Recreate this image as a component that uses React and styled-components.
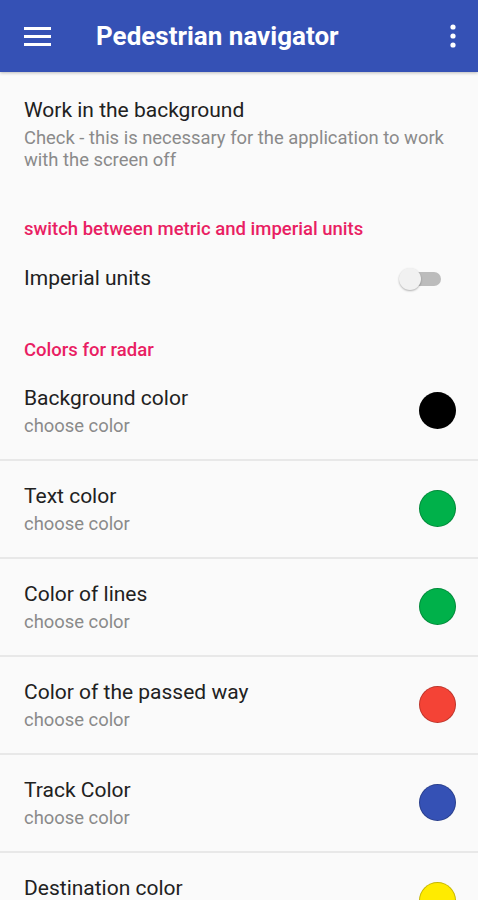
import React from 'react'
import styled, { createGlobalStyle } from 'styled-components'

const Global = createGlobalStyle`
    body {
        margin: 0;
        background: #fafafa;
        font-family: Roboto, "Noto Sans", sans-serif;
    }
`

const Screen = styled.div`
    width: 478px;
    height: 900px;
    background: #fafafa;
    overflow: hidden;
`

const AppBar = styled.header`
    height: 72px;
    background: #3551b5;
    display: flex;
    align-items: center;
    padding: 0 20px 0 24px;
    box-shadow: 0 1px 3px rgba(0, 0, 0, 0.25);
    color: #fff;
`

const Title = styled.h1`
    flex: 1;
    margin: 0 0 0 44px;
    font-size: 26px;
    font-weight: 700;
`

const Item = styled.div`
    display: flex;
    align-items: center;
    padding: ${(p) => p.pad || '22px 22px 22.5px 24px'};
    border-bottom: ${(p) => (p.divider ? '2px solid #e8e8e8' : 'none')};
`

const Texts = styled.div`
    flex: 1;
`

const ItemTitle = styled.div`
    font-size: 21px;
    line-height: 27px;
    color: #212121;
`

const ItemSub = styled.div`
    font-size: 18.4px;
    line-height: 22px;
    color: #8a8a8a;
    margin-top: 2.5px;
`

const Category = styled.div`
    font-size: 18.5px;
    line-height: 22px;
    font-weight: 500;
    color: #e91e63;
    padding: ${(p) => p.pad};
`

const Swatch = styled.div`
    width: 37px;
    height: 37px;
    border-radius: 50%;
    background: ${(p) => p.color};
    border: 1px solid rgba(0, 0, 0, 0.22);
    box-sizing: border-box;
`

const Switch = styled.div`
    position: relative;
    width: 42px;
    height: 22px;
    margin-right: 15px;
`

const Track = styled.div`
    position: absolute;
    left: 6px;
    right: 0;
    top: 4px;
    height: 14px;
    border-radius: 7px;
    background: #bcbcbc;
`

const Thumb = styled.div`
    position: absolute;
    left: 0;
    top: 0;
    width: 22px;
    height: 22px;
    border-radius: 50%;
    background: #f1f1f1;
    box-shadow: 0 1px 2px rgba(0, 0, 0, 0.3);
`

const colors = [
    { name: 'Background color', color: '#000000' },
    { name: 'Text color', color: '#00b14a' },
    { name: 'Color of lines', color: '#00b14a' },
    { name: 'Color of the passed way', color: '#f44336' },
    { name: 'Track Color', color: '#3551b5' },
    { name: 'Destination color', color: '#ffeb00' },
]

export default function App() {
    return (
        <Screen>
            <Global />
            <AppBar>
                <svg width="28" height="22" viewBox="0 0 28 22">
                    <rect x="0" y="2" width="27" height="3" fill="#fff" />
                    <rect x="0" y="10" width="27" height="3" fill="#fff" />
                    <rect x="0" y="18" width="27" height="3" fill="#fff" />
                </svg>
                <Title>Pedestrian navigator</Title>
                <svg width="10" height="26" viewBox="0 0 10 26">
                    <circle cx="5" cy="4" r="2.6" fill="#fff" />
                    <circle cx="5" cy="13" r="2.6" fill="#fff" />
                    <circle cx="5" cy="22" r="2.6" fill="#fff" />
                </svg>
            </AppBar>

            <Item pad="25px 22px 16px 24px">
                <Texts>
                    <ItemTitle>Work in the background</ItemTitle>
                    <ItemSub>Check - this is necessary for the application to work with the screen off</ItemSub>
                </Texts>
            </Item>

            <Category pad="31px 24px 0">switch between metric and imperial units</Category>
            <Item pad="25.5px 22px 25px 24px">
                <Texts>
                    <ItemTitle>Imperial units</ItemTitle>
                </Texts>
                <Switch>
                    <Track />
                    <Thumb />
                </Switch>
            </Item>

            <Category pad="21.5px 24px 2.5px">Colors for radar</Category>
            {colors.map((c, i) => (
                <Item key={c.name} divider={i < colors.length - 1}>
                    <Texts>
                        <ItemTitle>{c.name}</ItemTitle>
                        <ItemSub>choose color</ItemSub>
                    </Texts>
                    <Swatch color={c.color} />
                </Item>
            ))}
        </Screen>
    )
}
